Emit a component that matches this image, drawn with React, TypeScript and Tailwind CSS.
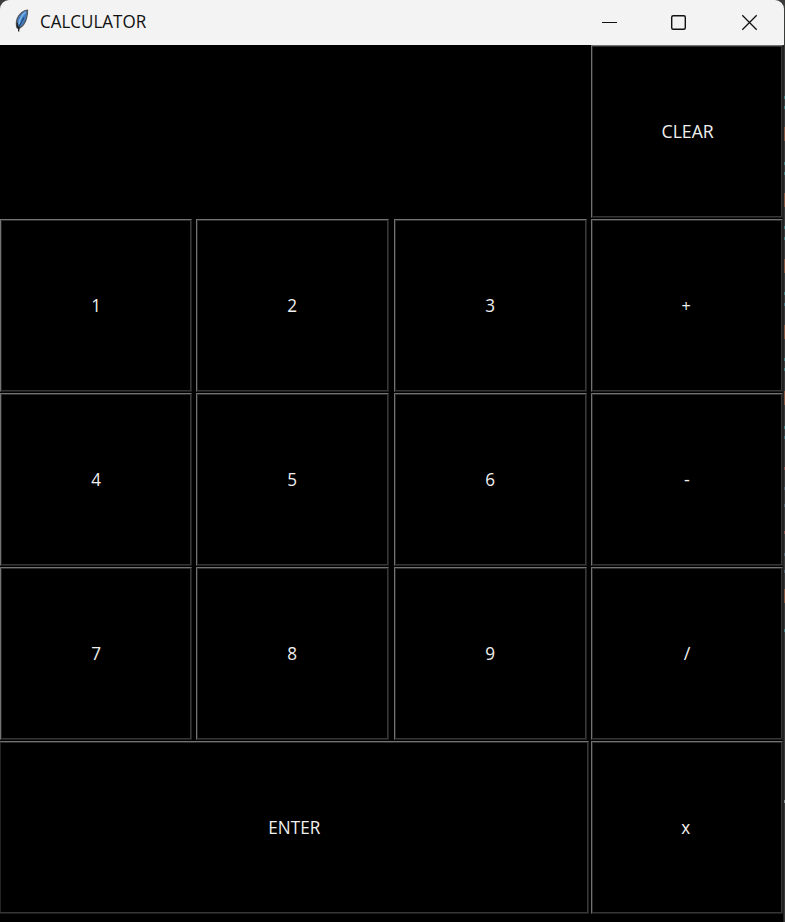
type KeyProps = { label: string; className: string; textClass?: string };

function Key({ label, className, textClass = "scale-x-[0.95]" }: KeyProps) {
  return (
    <button
      className={`flex h-[173px] items-center justify-center border border-t-[#727272] border-l-[#727272] border-r-[#222] border-b-[#1c1c1c] bg-black p-0 ${className}`}
    >
      <span className="flex h-full w-full items-center justify-center border border-t-[#2c2c2c] border-l-[#242424] border-r-[#383838] border-b-[#363636] pb-[2px]">
        <span className={`text-[18px] leading-6 text-[#f0f0f0] ${textClass}`}>{label}</span>
      </span>
    </button>
  );
}

function Feather() {
  return (
    <svg width="16" height="26" viewBox="0 0 16 26" className="shrink-0">
      <path d="M14.500 2.200C10.500 2.200 6.200 6 4.300 10.500c-1.200 3.500-1.300 6.300-.2 9.200l2 .8c3.500-2.200 6.200-6 7.300-10 .8-3 1.300-5.500 1.100-8.300Z" fill="#3f7fc6" stroke="#55585c" strokeWidth="1.300" />
      <path d="M12.600 4.200C9.300 6.500 7 10.500 6 16" fill="none" stroke="#7db2e8" strokeWidth="1.600" />
      <path d="M11 9.500C9 13 7 16.500 5.600 19.500" fill="none" stroke="#1c3558" strokeWidth="1" />
      <path d="M4.300 14.500c-.3 2 0 3.800.9 5.500l1.300-.3" fill="none" stroke="#202020" strokeWidth="1.300" />
      <path d="M5.700 18.500v5" stroke="#202020" strokeWidth="1.300" />
    </svg>
  );
}

const rows = [
  ["1", "2", "3", "+"],
  ["4", "5", "6", "-"],
  ["7", "8", "9", "/"],
];

const flecks = [
  [51, "#408080"], [61, "#408080"], [82, "#86553f"],
  [117, "#408080"], [127, "#408080"], [148, "#86553f"],
  [181, "#408080"], [192, "#408080"], [214, "#86553f"],
  [247, "#408080"], [258, "#40707c"], [280, "#86553f"],
  [313, "#408080"], [323, "#408080"], [346, "#86553f"],
  [381, "#408080"], [391, "#40707c"], [422, "#87504a"],
  [442, "#50606c"], [459, "#50606c"], [486, "#87504a"],
  [508, "#50606c"], [525, "#50606c"], [544, "#86553f"],
  [584, "#408080"], [755, "#8a9494"],
] as const;

export default function App() {
  return (
    <div className="h-[922px] w-[785px] overflow-hidden bg-[#3a3d3a] font-['Open_Sans','Noto_Sans',sans-serif]">
      <header className="flex h-[45px] w-[784px] items-center rounded-t-[9px] bg-[#f3f3f3]">
        <div className="flex h-full flex-1 items-center pl-[13px] pb-[4px]">
          <Feather />
          <h1 className="ml-[11px] origin-left scale-x-[0.945] text-[18px] leading-6 font-normal text-[#111]">CALCULATOR</h1>
        </div>
        <svg width="204" height="44" viewBox="580 0 204 44" fill="none" stroke="#111" strokeWidth="1.300">
          <path d="M602 21.500h15" strokeWidth="1" />
          <rect x="671.700" y="14.700" width="13.600" height="13.600" rx="1.500" strokeWidth="1.400" />
          <path d="m742.300 14.300 14.400 14.400m0-14.400-14.400 14.400" />
        </svg>
      </header>
      <div className="flex h-[877px]">
        <main className="w-[783px] bg-black">
          <div className="flex h-[174px] justify-end">
            <Key label="CLEAR" className="w-[192px]" textClass="scale-x-[0.98] pl-px" />
          </div>
          {rows.map((r) => (
            <div key={r[0]} className="flex h-[174px]">
              <Key label={r[0]} className="w-[192px]" />
              <Key label={r[1]} className="ml-1 w-[193px]" />
              <Key label={r[2]} className="ml-[5px] w-[193px]" />
              <Key label={r[3]} className="ml-1 w-[192px]" textClass={r[3] === "+" ? "scale-[0.9] pr-px pt-[2px]" : ""} />
            </div>
          ))}
          <div className="flex h-[181px]">
            <Key label="ENTER" className="w-[589px] border-l-0" />
            <Key label="x" className="ml-[2px] w-[192px]" textClass="scale-x-[0.95] pr-[2px]" />
          </div>
        </main>
        <div className="relative w-[2px] border-l border-[#222] bg-[#393939]">
          {flecks.map(([y, c]) => (
            <i key={y} className="absolute left-0 w-px" style={{ top: y, height: c === "#86553f" ? 14 : 3, background: c }} />
          ))}
        </div>
      </div>
    </div>
  );
}
